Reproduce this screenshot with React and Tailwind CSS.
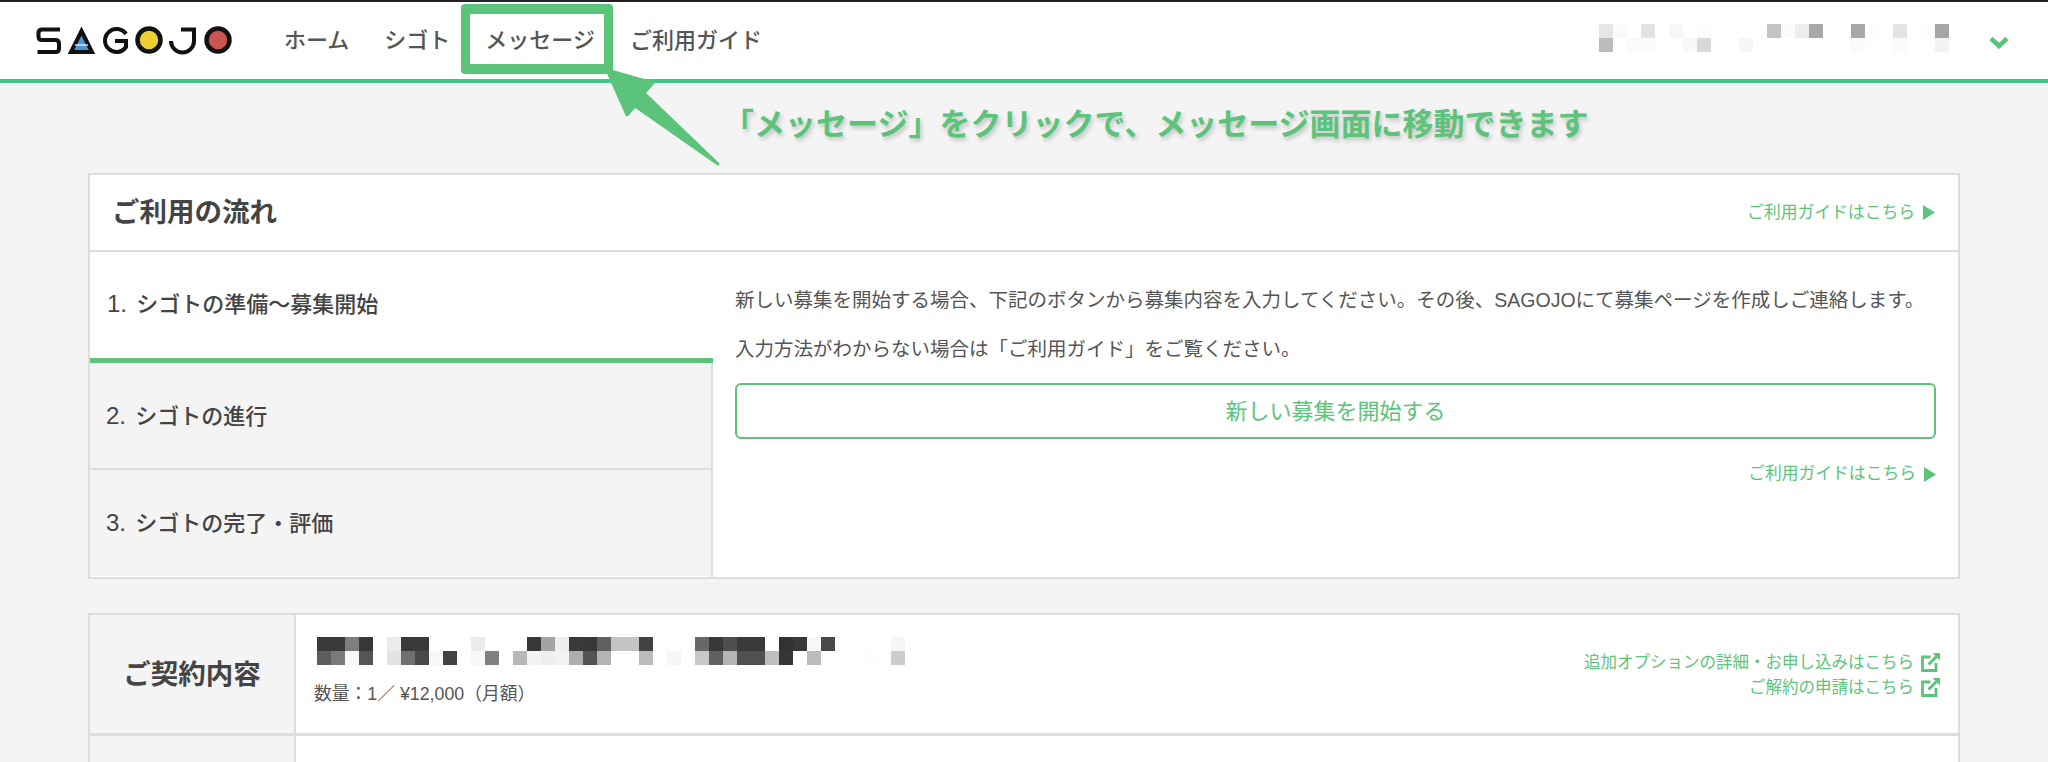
import React from 'react';

const headerMosaic = [
  ['e6', 'bb'], ['fa', 'ff'], ['ff', 'fa'], ['e2', 'fb'], ['ff', 'ff'], ['f7', 'ff'], ['ff', 'f9'], ['fc', 'd9'],
  ['ff', 'ff'], ['ff', 'ff'], ['ff', 'f6'], ['ff', 'ff'], ['c4', 'ff'], ['fb', 'ff'], ['ed', 'ff'], ['a8', 'ff'],
  ['ff', 'ff'], ['ff', 'ff'], ['a8', 'fa'], ['fd', 'ff'], ['ff', 'ff'], ['e4', 'fa'], ['ff', 'ff'], ['fc', 'ff'], ['a6', 'f2'],
];

const planMosaic = [
  ['3a', '5e'], ['3a', '7a'], ['7e', 'f8'], ['38', '55'], ['ff', 'ff'], ['ec', 'e2'], ['3a', '70'], ['3a', '48'],
  ['ff', 'f8'], ['ff', '42'], ['ff', 'ff'], ['ec', 'f8'], ['ff', '80'], ['ff', 'ff'], ['ff', 'b8'], ['38', 'f3'],
  ['a4', 'ee'], ['ee', 'f2'], ['3a', 'ae'], ['38', '52'], ['60', 'b4'], ['c4', 'ff'], ['c4', 'ff'], ['42', 'bc'],
  ['ff', 'ff'], ['ff', 'f6'], ['ff', 'ff'], ['68', 'c8'], ['38', '60'], ['4e', 'b4'], ['3a', '50'], ['3a', '50'],
  ['ff', 'be'], ['32', '36'], ['38', 'ff'], ['f8', 'bc'], ['48', 'ff'], ['ff', 'ff'], ['ff', 'ff'], ['ff', 'fd'], ['ff', 'ff'], ['f6', 'cc'],
];

export default function App() {
  return (
    <div className="relative h-[762px] overflow-hidden bg-[#f4f4f4] font-['Liberation_Sans','Noto_Sans_CJK_JP',sans-serif] text-[#444]">
      {/* Header */}
      <header className="flex h-[83px] items-center border-t-2 border-b-4 border-t-[#222] border-b-[#3fc68c] bg-white">
        <Logo />
        <nav className="ml-[52px] flex gap-[35px] text-[22px] font-medium leading-none text-[#555]">
          <span>ホーム</span>
          <span>シゴト</span>
          <span>メッセージ</span>
          <span>ご利用ガイド</span>
        </nav>
        <div className="ml-auto mb-[5px]">
          <Mosaic cols={headerMosaic} />
        </div>
        <svg className="ml-[40px] mr-[39px] mt-[3px]" width="20" height="14" viewBox="0 0 20 14">
          <path d="M2 3.500L10 11L18 3.500" fill="none" stroke="#5cc47a" strokeWidth="4.500" />
        </svg>
      </header>

      <main className="mx-[88px] pt-[90px]">
        {/* Flow card */}
        <section className="h-[406px] border-2 border-[#ddd] bg-white">
          <div className="flex h-[77px] items-center justify-between border-b-2 border-[#ddd] pl-[22px] pr-[23px]">
            <h2 className="text-[27.500px] font-bold leading-none text-[#444]">ご利用の流れ</h2>
            <span className="pt-[1px]">
              <GuideLink />
            </span>
          </div>
          <div className="flex h-[325px]">
            <div className="w-[623px] shrink-0 border-r-2 border-[#ddd]">
              <div className="-mr-[2px] flex h-[111px] items-center border-b-[5px] border-[#5cc47a] bg-white pb-[2px] pl-[17px]">
                <TabLabel n="1." text="シゴトの準備〜募集開始" />
              </div>
              <div className="flex h-[107px] items-center border-b-2 border-[#ddd] bg-[#f4f4f4] pl-[16px]">
                <TabLabel n="2." text="シゴトの進行" />
              </div>
              <div className="flex h-[106px] items-center bg-[#f4f4f4] pl-[16px]">
                <TabLabel n="3." text="シゴトの完了・評価" />
              </div>
            </div>
            <div className="flex-1 pl-[22px] pr-[22px] pt-[34px]">
              <p className="text-[19.500px] leading-[28px] text-[#555]">
                新しい募集を開始する場合、下記のボタンから募集内容を入力してください。その後、SAGOJOにて募集ページを作成しご連絡します。
              </p>
              <p className="mt-[21px] text-[19.500px] leading-[28px] text-[#555]">
                入力方法がわからない場合は「ご利用ガイド」をご覧ください。
              </p>
              <button className="mt-[20px] flex h-[56px] w-full items-center justify-center rounded-[6px] border-2 border-[#5cc47a] text-[22px] text-[#5cc47a]">
                新しい募集を開始する
              </button>
              <div className="mt-[27px] flex justify-end">
                <GuideLink />
              </div>
            </div>
          </div>
        </section>

        {/* Contract rows */}
        <section className="mt-[34px] border-2 border-[#ddd]">
          <div className="flex h-[121px] border-b-[3px] border-[#ddd]">
            <div className="flex w-[206px] shrink-0 items-center justify-center border-r-2 border-[#ddd] bg-[#f4f4f4] pt-[2px] text-[27.500px] font-bold text-[#444]">
              ご契約内容
            </div>
            <div className="flex flex-1 justify-between bg-white pl-[18px] pr-[18px]">
              <div className="pt-[22px]">
                <div className="ml-[3px]">
                  <Mosaic cols={planMosaic} />
                </div>
                <p className="mt-[17px] text-[17.800px] leading-[24px] text-[#555]">数量：1／ ¥12,000（月額）</p>
              </div>
              <div className="flex flex-col items-end gap-[6px] pt-[38px] text-[16.5px] leading-[19px] text-[#5cc47a]">
                <ExternalLink>追加オプションの詳細・お申し込みはこちら</ExternalLink>
                <ExternalLink>ご解約の申請はこちら</ExternalLink>
              </div>
            </div>
          </div>
          <div className="flex h-[60px]">
            <div className="w-[206px] shrink-0 border-r-2 border-[#ddd] bg-[#f4f4f4]" />
            <div className="flex-1 bg-white" />
          </div>
        </section>
      </main>

      {/* Annotation over the page */}
      <div className="absolute left-[461px] top-[4px] h-[70px] w-[152px] rounded-[4px] border-x-[9px] border-y-[10px] border-[#5cc47a]" />
      <svg className="absolute left-[600px] top-[60px]" width="130" height="115" viewBox="600 60 130 115">
        <path
          d="M607 70L653 83L644 93L718 164L635 106L627 115Z"
          fill="#5cc47a"
          stroke="#5cc47a"
          strokeWidth="3"
          strokeLinejoin="round"
        />
      </svg>
      <p className="absolute left-[723px] top-[103px] whitespace-nowrap text-[31px] font-bold leading-[44px] text-[#5cc47a] [text-shadow:2px_3px_4px_rgba(0,0,0,0.2)]">
        「メッセージ」をクリックで、メッセージ画面に移動できます
      </p>
    </div>
  );
}

function TabLabel({ n, text }) {
  return (
    <span className="text-[22px] font-medium leading-none">
      <span className="mr-[3px] text-[24px]">{n}</span> {text}
    </span>
  );
}

function Mosaic({ cols }) {
  return (
    <div className="flex">
      {cols.map((col, i) => (
        <div key={i} className="w-[14px]">
          <div className="h-[14px]" style={{ backgroundColor: grey(col[0]) }} />
          <div className="h-[14px]" style={{ backgroundColor: grey(col[1]) }} />
        </div>
      ))}
    </div>
  );
}

function grey(v) {
  return `#${v}${v}${v}`;
}

function GuideLink() {
  return (
    <span className="flex items-center gap-[8px] text-[16.800px] leading-none text-[#5cc47a]">
      ご利用ガイドはこちら
      <svg width="12" height="15" viewBox="0 0 12 15">
        <path d="M0 0L12 7.500L0 15Z" fill="#5cc47a" />
      </svg>
    </span>
  );
}

function ExternalLink({ children }) {
  return (
    <span className="flex items-center gap-[7px]">
      {children}
      <svg width="19" height="19" viewBox="0 0 19 19" fill="none" stroke="#5cc47a" strokeWidth="2.800">
        <path d="M9.500 4H1.500V17.500H15V10" />
        <path d="M7.500 11.500L15.500 3.500" />
        <path d="M11.500 0H19V7.500Z" fill="#5cc47a" stroke="none" />
      </svg>
    </span>
  );
}

function Logo() {
  return (
    <svg className="ml-[36px] shrink-0" width="196" height="30" viewBox="36 22 196 30" fill="none" stroke="#111" strokeWidth="4">
      {/* S */}
      <path d="M60 25.500H42Q38.500 25.500 38.500 29V32.500Q38.500 36 42 36H55.500Q59 36 59 39.500V44.500Q59 48 55.500 48H37.500" />
      {/* A */}
      <path d="M81.500 27L92 48H71Z" fill="#4f93d2" />
      <path d="M75 41H88" stroke="#cfe3f5" strokeWidth="1.500" />
      {/* G */}
      <path d="M126 30A11.500 11.500 0 1 0 126 43V37H115" />
      {/* yellow O */}
      <circle cx="149" cy="36" r="11.500" fill="#ebd02f" strokeWidth="4.500" />
      {/* J */}
      <path d="M181 25.500H194V37A11.500 11.500 0 0 1 171 37" />
      {/* red O */}
      <circle cx="218" cy="36" r="11.500" fill="#c9564f" strokeWidth="4.500" />
    </svg>
  );
}
